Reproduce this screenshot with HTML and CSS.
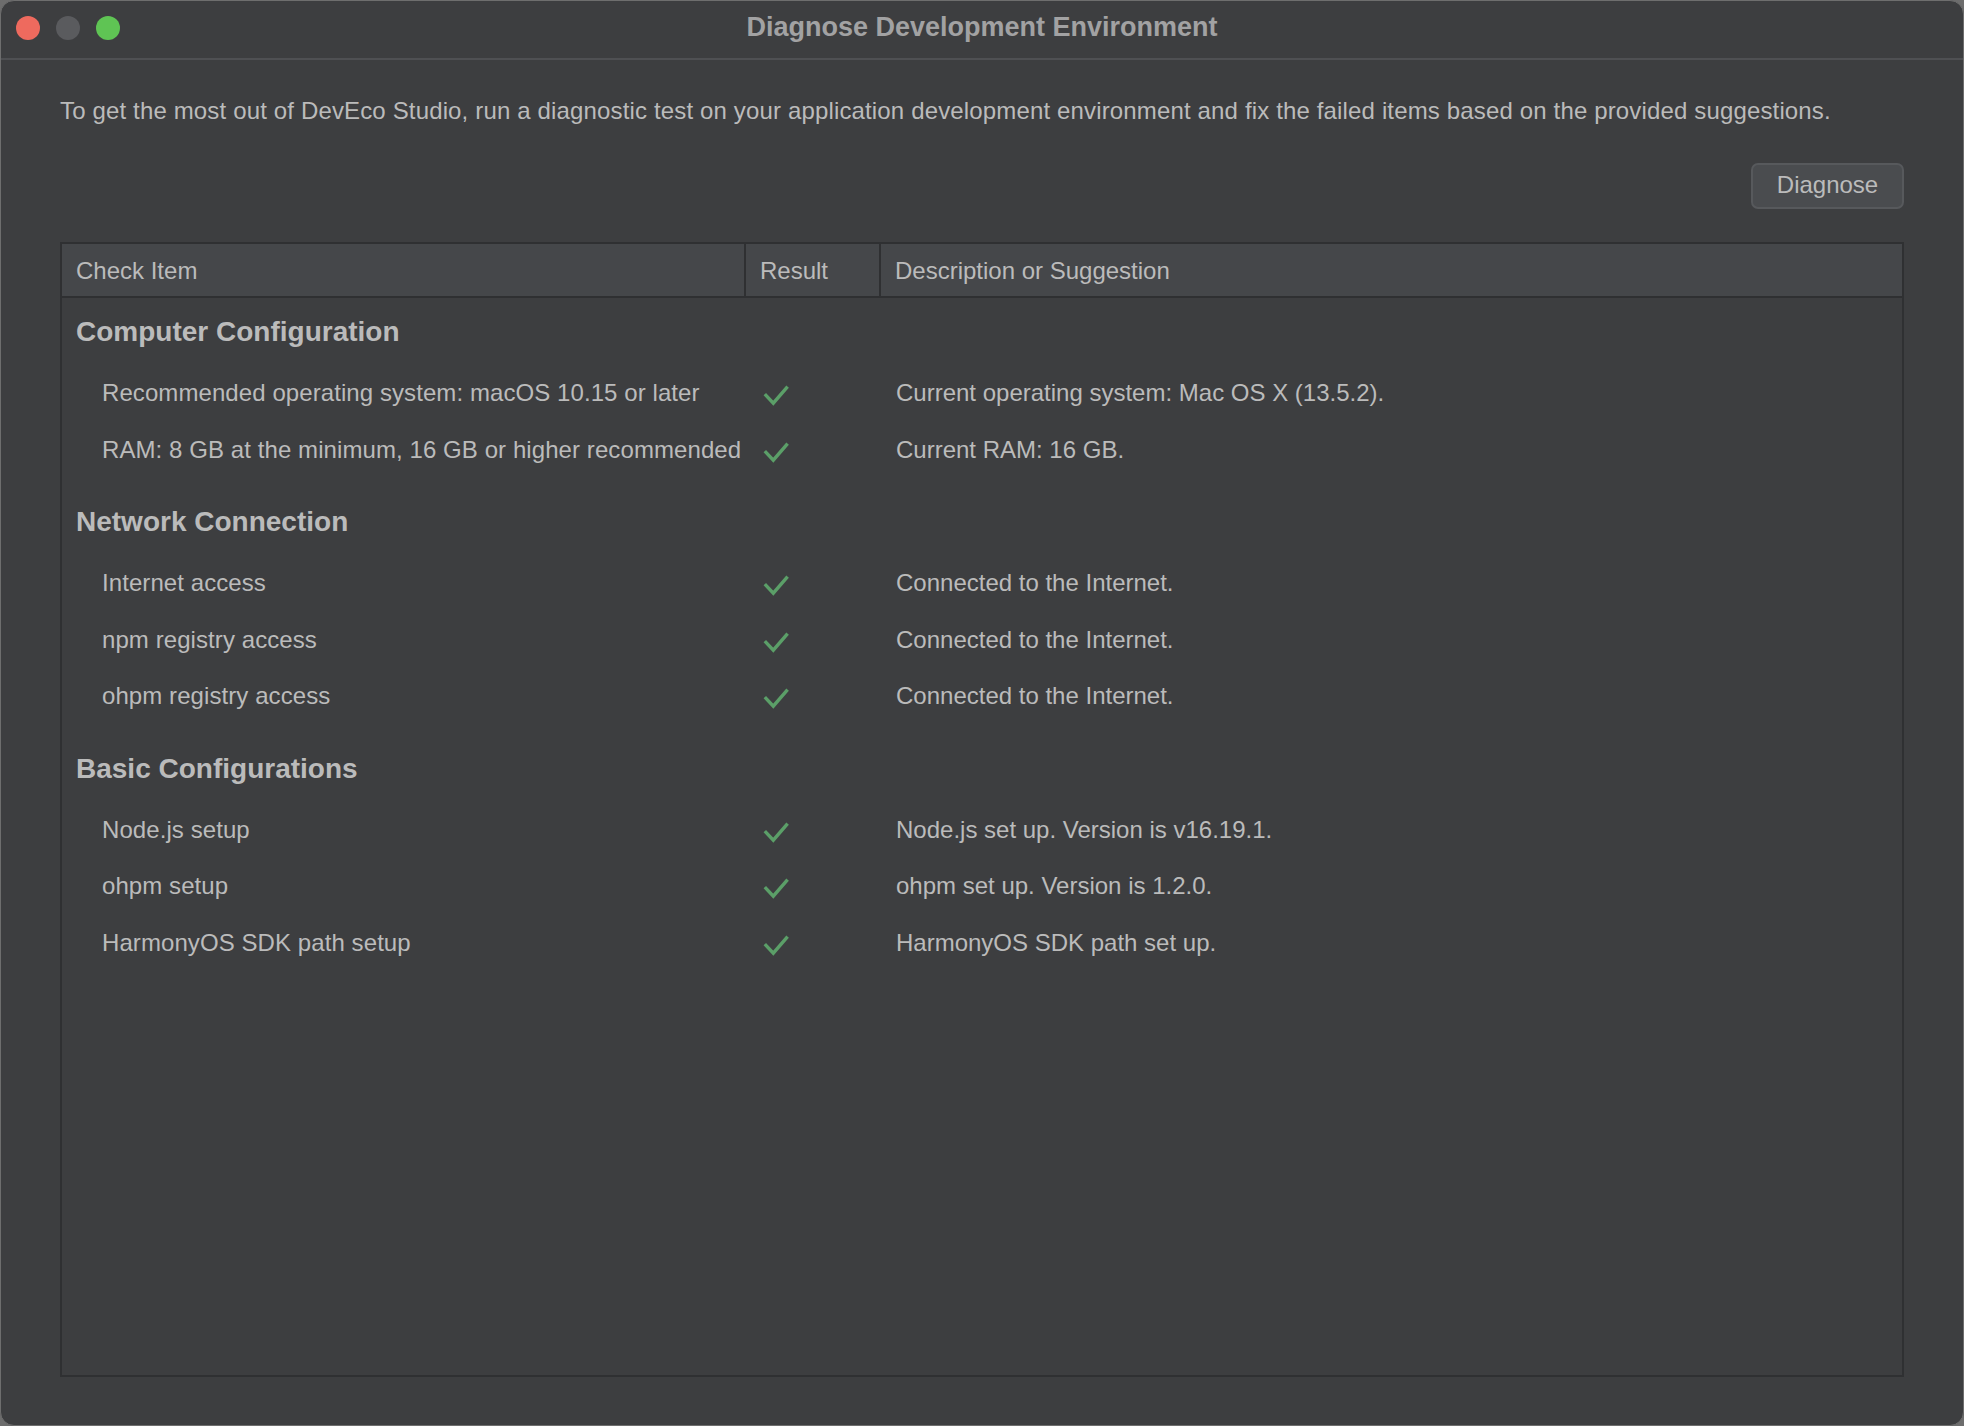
FILE: index.html
```html
<!DOCTYPE html>
<html lang="en">
<head>
<meta charset="utf-8">
<title>Diagnose Development Environment</title>
<link rel="stylesheet" href="styles.css">
</head>
<body>
<div class="window">
  <div class="titlebar">
    <div class="lights">
      <span class="light red"></span>
      <span class="light gray"></span>
      <span class="light green"></span>
    </div>
    <div class="title">Diagnose Development Environment</div>
  </div>
  <div class="content">
    <p class="intro">To get the most out of DevEco Studio, run a diagnostic test on your application development environment and fix the failed items based on the provided suggestions.</p>
    <div class="actions"><button class="btn">Diagnose</button></div>
    <div class="table">
      <div class="thead">
        <div class="th c1">Check Item</div>
        <div class="th c2">Result</div>
        <div class="th c3">Description or Suggestion</div>
      </div>
      <div class="tbody">
        <div class="group">
          <div class="section">Computer Configuration</div>
          <div class="row"><div class="item">Recommended operating system: macOS 10.15 or later</div><div class="res"><svg class="check" viewBox="0 0 26 22"><path d="M1.8 10.2 L10.3 19.2 L24.6 2.6"/></svg></div><div class="desc">Current operating system: Mac OS X (13.5.2).</div></div>
          <div class="row"><div class="item">RAM: 8 GB at the minimum, 16 GB or higher recommended</div><div class="res"><svg class="check" viewBox="0 0 26 22"><path d="M1.8 10.2 L10.3 19.2 L24.6 2.6"/></svg></div><div class="desc">Current RAM: 16 GB.</div></div>
        </div>
        <div class="group">
          <div class="section">Network Connection</div>
          <div class="row"><div class="item">Internet access</div><div class="res"><svg class="check" viewBox="0 0 26 22"><path d="M1.8 10.2 L10.3 19.2 L24.6 2.6"/></svg></div><div class="desc">Connected to the Internet.</div></div>
          <div class="row"><div class="item">npm registry access</div><div class="res"><svg class="check" viewBox="0 0 26 22"><path d="M1.8 10.2 L10.3 19.2 L24.6 2.6"/></svg></div><div class="desc">Connected to the Internet.</div></div>
          <div class="row"><div class="item">ohpm registry access</div><div class="res"><svg class="check" viewBox="0 0 26 22"><path d="M1.8 10.2 L10.3 19.2 L24.6 2.6"/></svg></div><div class="desc">Connected to the Internet.</div></div>
        </div>
        <div class="group">
          <div class="section">Basic Configurations</div>
          <div class="row"><div class="item">Node.js setup</div><div class="res"><svg class="check" viewBox="0 0 26 22"><path d="M1.8 10.2 L10.3 19.2 L24.6 2.6"/></svg></div><div class="desc">Node.js set up. Version is v16.19.1.</div></div>
          <div class="row"><div class="item">ohpm setup</div><div class="res"><svg class="check" viewBox="0 0 26 22"><path d="M1.8 10.2 L10.3 19.2 L24.6 2.6"/></svg></div><div class="desc">ohpm set up. Version is 1.2.0.</div></div>
          <div class="row"><div class="item">HarmonyOS SDK path setup</div><div class="res"><svg class="check" viewBox="0 0 26 22"><path d="M1.8 10.2 L10.3 19.2 L24.6 2.6"/></svg></div><div class="desc">HarmonyOS SDK path set up.</div></div>
        </div>
      </div>
    </div>
  </div>
</div>
</body>
</html>
```

FILE: styles.css
```css
* { box-sizing: border-box; }
html, body {
  margin: 0;
  padding: 0;
  background: #6d6d6d;
}
body {
  font-family: "Liberation Sans", Arial, Helvetica, sans-serif;
  color: #bbbbbb;
}
.window {
  width: 1964px;
  height: 1426px;
  background: #3d3e40;
  border: 1px solid #6e6e6e;
  border-radius: 14px;
  overflow: hidden;
  display: flex;
  flex-direction: column;
}
.titlebar {
  position: relative;
  height: 59px;
  border-bottom: 2px solid #4f5053;
  display: flex;
  align-items: center;
  justify-content: center;
  flex: none;
}
.lights {
  position: absolute;
  left: 15px;
  top: 15px;
  display: flex;
  gap: 16px;
}
.light {
  width: 24px;
  height: 24px;
  border-radius: 50%;
  display: block;
}
.light.red { background: #ee6a5e; }
.light.gray { background: #5a5b5e; }
.light.green { background: #5fc454; }
.title {
  font-weight: bold;
  font-size: 27px;
  color: #a2a2a3;
  margin-top: -5px;
}
.content {
  flex: 1;
  display: flex;
  flex-direction: column;
  padding: 0 59px 48px 59px;
}
.intro {
  margin: 35px 0 0 0;
  font-size: 24px;
  line-height: 32px;
  letter-spacing: 0.15px;
  color: #bbbbbb;
  white-space: nowrap;
}
.actions {
  display: flex;
  justify-content: flex-end;
  margin-top: 36px;
}
.btn {
  width: 153px;
  height: 46px;
  background: #4a4c4f;
  border: 2px solid #57595c;
  border-radius: 7px;
  font-family: "Liberation Sans", Arial, Helvetica, sans-serif;
  font-size: 24px;
  color: #bbbbbb;
  padding: 0 0 2px 0;
}
.table {
  margin-top: 33px;
  flex: 1;
  border: 2px solid #2f3032;
  display: flex;
  flex-direction: column;
}
.thead {
  display: flex;
  height: 54px;
  background: #45474a;
  border-bottom: 2px solid #2f3032;
  flex: none;
}
.th {
  font-size: 24px;
  line-height: 52px;
  padding-left: 14px;
  padding-top: 1px;
  color: #bbbbbb;
}
.th.c1 { width: 684px; border-right: 2px solid #2f3032; }
.th.c2 { width: 135px; border-right: 2px solid #2f3032; }
.th.c3 { flex: 1; }
.tbody { padding-top: 1px; }
.group + .group { margin-top: 11px; }
.section {
  height: 66px;
  line-height: 66px;
  font-size: 28px;
  font-weight: bold;
  padding-left: 14px;
  color: #bbbbbb;
}
.row {
  display: grid;
  grid-template-columns: 684px 135px 1fr;
  height: 56.5px;
  align-items: center;
  font-size: 24px;
}
.item { padding-left: 40px; white-space: nowrap; letter-spacing: 0.08px; }
.res { padding-left: 17px; display: flex; align-items: center; padding-top: 4px; }
.desc { padding-left: 15px; white-space: nowrap; }
.check {
  width: 26px;
  height: 22px;
  fill: none;
  stroke: #5b9f68;
  stroke-width: 3.4;
  stroke-linecap: butt;
  stroke-linejoin: miter;
}
```
